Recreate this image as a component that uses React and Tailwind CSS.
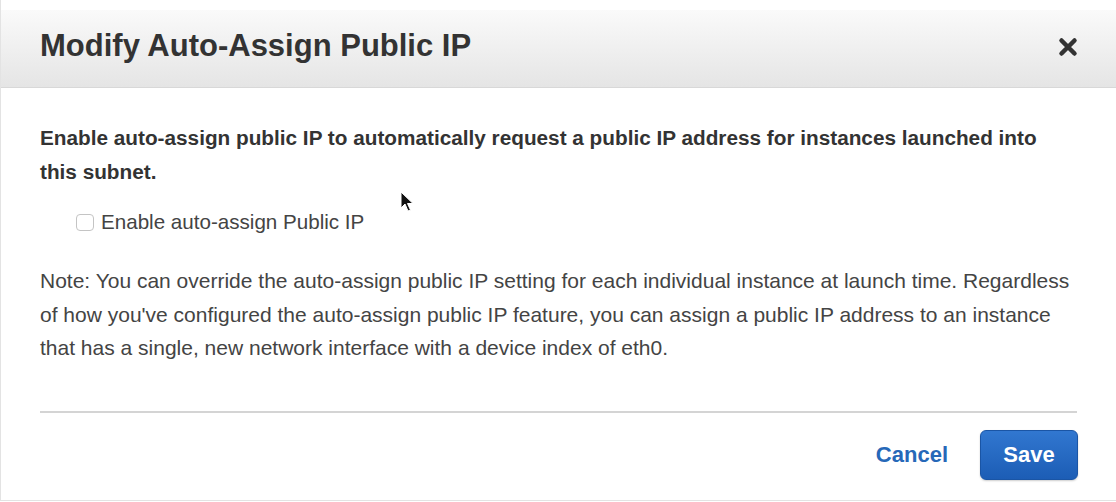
export default function App() {
  return (
    <div className="relative w-[1116px] h-[502px] bg-white font-['Liberation_Sans',Arial,sans-serif] overflow-hidden">
      <div className="h-[501px] border-l border-b border-[#e3e3e3] flex flex-col pt-[10px]">
        {/* header */}
        <div className="h-[78px] flex items-center justify-between pl-[39px] pr-[38px] bg-gradient-to-b from-[#fafafa] to-[#e5e5e5] border-b border-[#d8d8d8]">
          <h1 className="text-[31px] font-bold text-[#333] pb-[4px]">Modify Auto-Assign Public IP</h1>
          <svg width="20" height="20" viewBox="0 0 20 20" className="mb-[4px]">
            <path d="M3.5 3.5 L16.5 16.5 M16.5 3.5 L3.5 16.5" stroke="#333" strokeWidth="4.5" strokeLinecap="round" />
          </svg>
        </div>

        {/* body */}
        <div className="px-[39px] pt-[33px]">
          <p className="text-[20.75px] leading-[34px] font-bold text-[#333] whitespace-nowrap">
            Enable auto-assign public IP to automatically request a public IP address for instances launched into
            <br />
            this subnet.
          </p>
          <label className="flex items-center gap-[7px] pl-[36px] mt-[21px] h-[24px]">
            <span className="w-[18px] h-[17px] rounded-[4px] border border-[#c4c4c4] bg-white" />
            <span className="text-[20.6px] text-[#444]">Enable auto-assign Public IP</span>
          </label>
          <p className="mt-[30px] text-[21px] leading-[33.5px] text-[#444] whitespace-nowrap">
            Note: You can override the auto-assign public IP setting for each individual instance at launch time. Regardless
            <br />
            of how you've configured the auto-assign public IP feature, you can assign a public IP address to an instance
            <br />
            that has a single, new network interface with a device index of eth0.
          </p>
          <div className="mt-[46px] h-[2px] bg-[#d4d4d4]" />
        </div>

        {/* footer */}
        <div className="flex justify-end items-center gap-[32px] pr-[38px] pt-[17px]">
          <button className="text-[22px] font-bold text-[#2668b8]">Cancel</button>
          <button className="w-[98px] h-[50px] rounded-[6px] bg-gradient-to-b from-[#3177d0] to-[#1c5db5] border border-[#1a55a5] text-[22px] font-bold text-white shadow-[0_1px_2px_rgba(0,0,0,0.2)]">
            Save
          </button>
        </div>
      </div>

      {/* mouse cursor */}
      <svg className="absolute left-[400px] top-[191px]" width="16" height="24" viewBox="0 0 16 24">
        <path d="M1 1 L1 17 L5 13 L8 20 L10.5 19 L7.5 12.5 L13 12.5 Z" fill="#111" stroke="#fff" strokeWidth="1" />
      </svg>
    </div>
  );
}
